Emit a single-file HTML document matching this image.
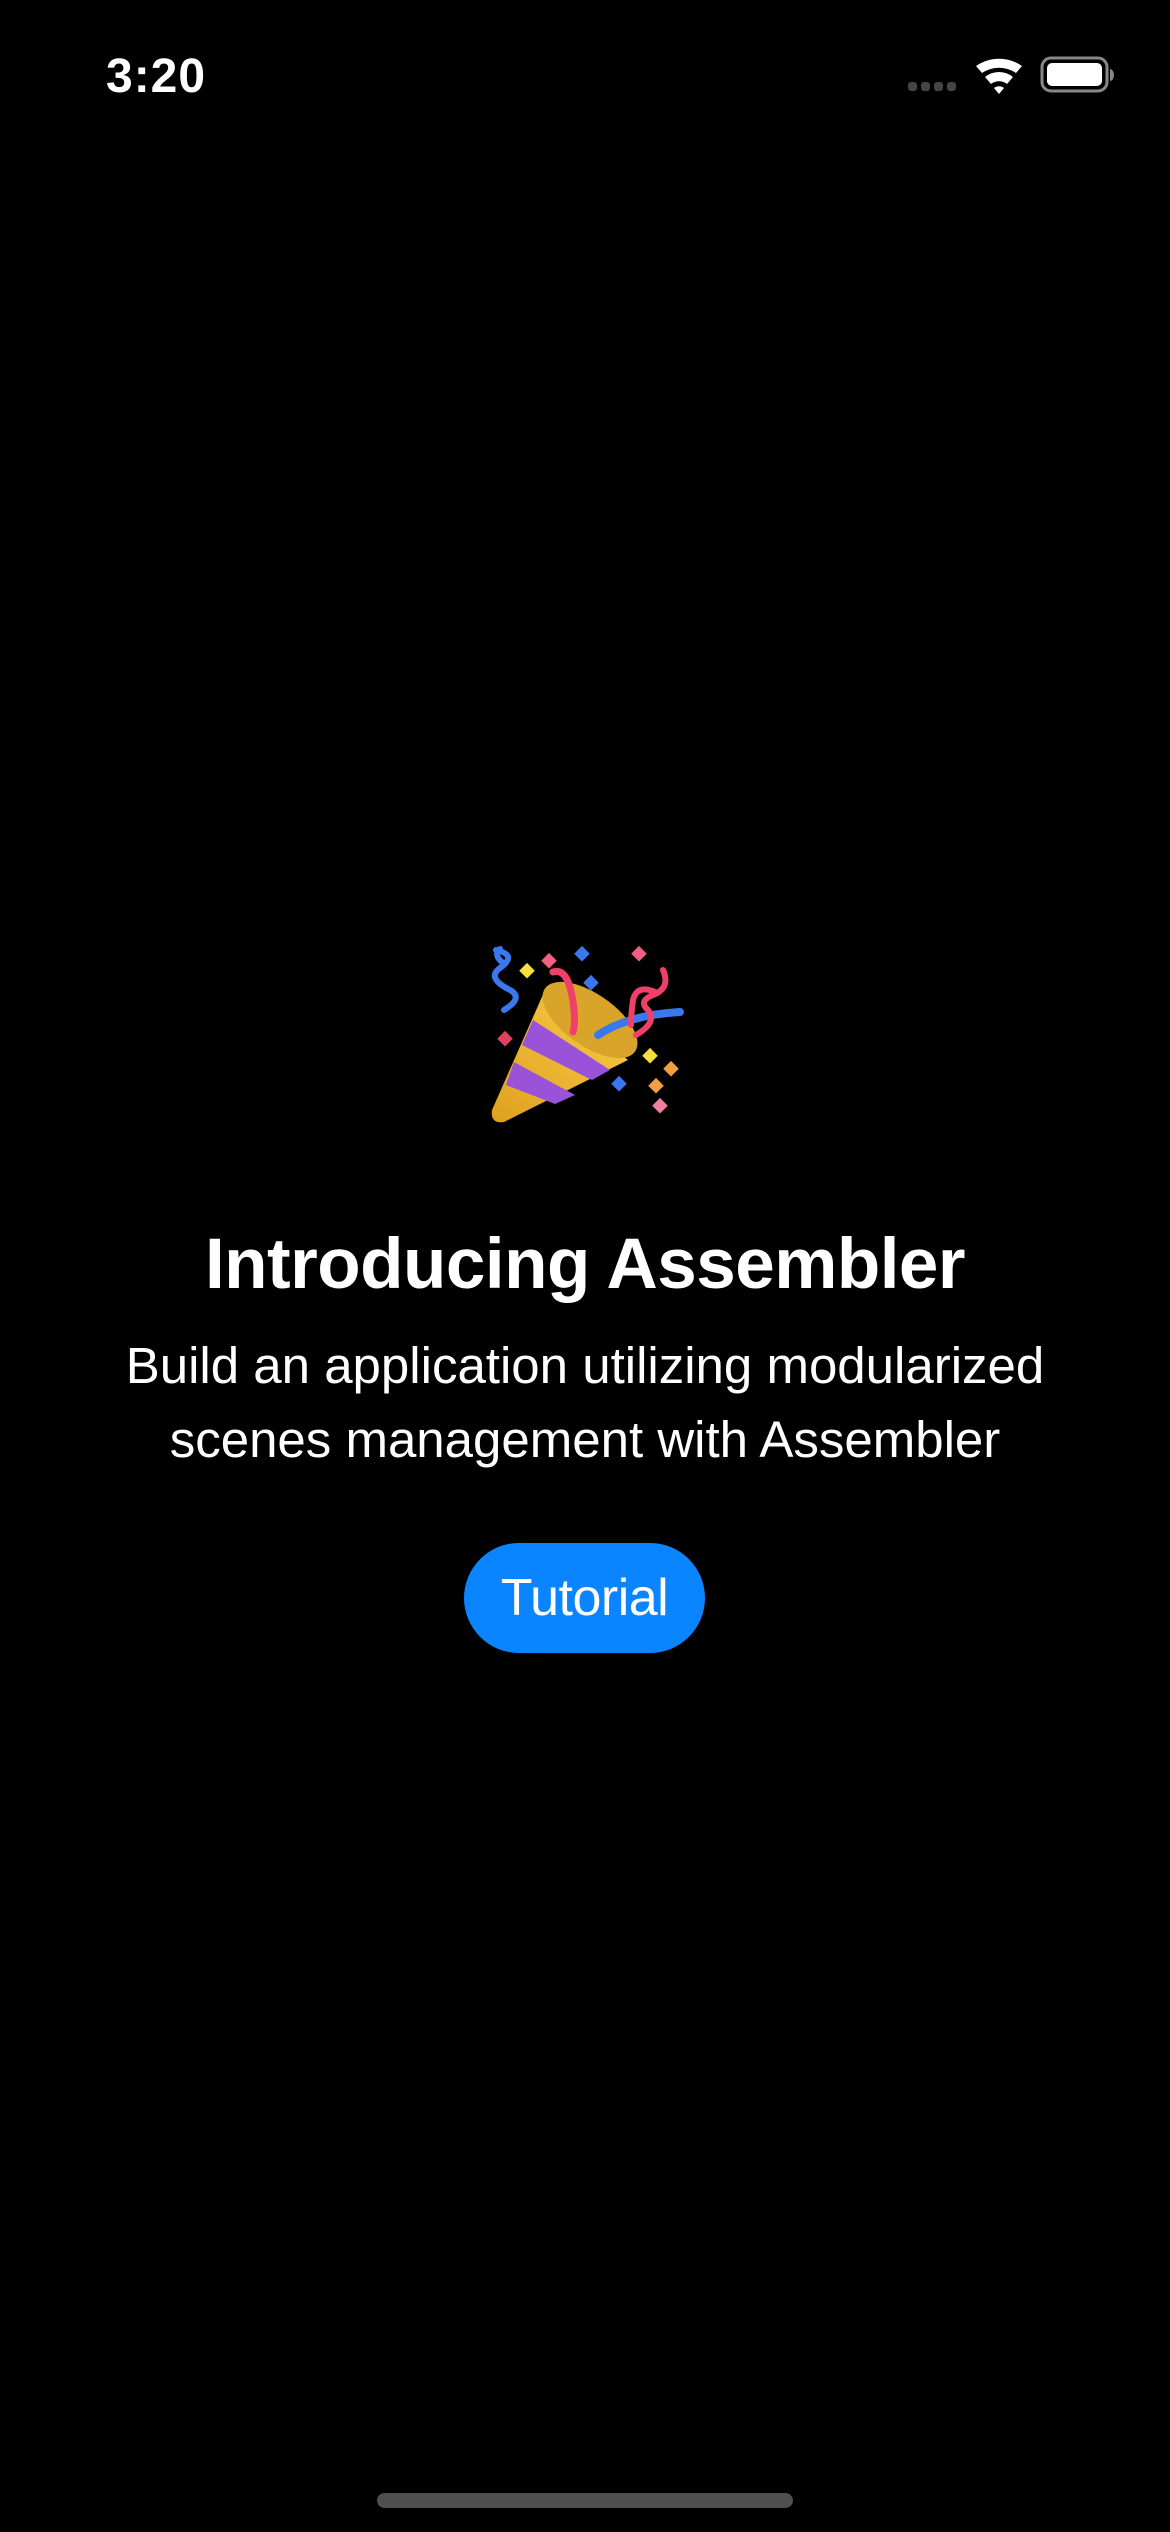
<!DOCTYPE html>
<html><head><meta charset="utf-8">
<style>
html,body{margin:0;padding:0;background:#000;}
body{width:1170px;height:2532px;position:relative;overflow:hidden;font-family:"Liberation Sans",sans-serif;color:#fff;}
.abs{position:absolute;}
.time{left:106px;top:49px;font-size:48px;font-weight:bold;letter-spacing:1px;}
.title{left:0;width:1170px;top:1225px;text-align:center;font-size:71px;font-weight:bold;letter-spacing:-0.5px;line-height:80px;}
.sub{left:0;width:1170px;top:1329px;text-align:center;font-size:51px;line-height:74px;letter-spacing:0px;}
.btn{left:464px;top:1543px;width:241px;height:110px;border-radius:55px;background:#0a84ff;text-align:center;line-height:110px;font-size:52px;letter-spacing:-0.5px;}
.home{left:377px;top:2493px;width:416px;height:15px;border-radius:8px;background:#4f4f4f;}
</style></head><body>
<div class="abs time">3:20</div>
<svg class="abs" style="left:900px;top:50px" width="220" height="50" viewBox="900 50 220 50">
 <g fill="#444"><rect x="908" y="82" width="9" height="9" rx="3"/><rect x="921" y="82" width="9" height="9" rx="3"/><rect x="934" y="82" width="9" height="9" rx="3"/><rect x="947" y="82" width="9" height="9" rx="3"/></g>
 <path d="M976 66 A40 40 0 0 1 1022 66 L1016 73 A30 30 0 0 0 982 73 Z" fill="#fff"/>
 <path d="M985 77 A22 22 0 0 1 1013 77 L1007 84 A13 13 0 0 0 991 84 Z" fill="#fff"/>
 <path d="M994 88 A8 8 0 0 1 1004 88 L999 94 Z" fill="#fff"/>
 <rect x="1042" y="58" width="65" height="33" rx="9" fill="none" stroke="#888" stroke-width="3"/>
 <rect x="1047" y="63" width="55" height="23" rx="5" fill="#fff"/>
 <path d="M1110 69 a4 6 0 0 1 0 12 z" fill="#888"/>
</svg>
<svg class="abs" style="left:480px;top:930px" width="210" height="205" viewBox="480 930 210 205">
 <defs><linearGradient id="g" x1="0" y1="1" x2="1" y2="0"><stop offset="0" stop-color="#e0a020"/><stop offset="1" stop-color="#f7cf4a"/></linearGradient></defs>
 <path d="M503 963 q-10 -8 -3 -14 M496 950 q22 5 4 18 q-14 10 10 22 q14 8 -6 20" stroke="#3a78f0" stroke-width="6" fill="none" stroke-linecap="round"/>
 <path d="M545 990 L492 1110 q-2 14 12 12 L628 1060 Z" fill="url(#g)"/>
 <path d="M533 1020 L610 1070 L592 1080 L522 1045 Z M514 1062 L575 1095 L555 1104 L506 1085 Z" fill="#9a52d8"/>
 <ellipse cx="590" cy="1020" rx="55" ry="26" transform="rotate(35 590 1020)" fill="#d8a42a"/>
 <path d="M553 972 q15 -5 20 30 q3 20 0 30" stroke="#f0406a" stroke-width="7" fill="none" stroke-linecap="round"/>
 <path d="M598 1035 q30 -20 82 -23" stroke="#3a78f0" stroke-width="8" fill="none" stroke-linecap="round"/>
 <path d="M663 970 q8 18 -10 25 q-15 6 -5 15 q10 12 -12 25 M655 992 q-18 -8 -22 8 q-2 15 -2 25" stroke="#f0406a" stroke-width="6" fill="none" stroke-linecap="round"/>
 <g>
 <rect x="522" y="965" width="11" height="11" fill="#f5e040" transform="rotate(45 527 970)"/>
 <rect x="544" y="955" width="11" height="11" fill="#f06080" transform="rotate(45 549 960)"/>
 <rect x="577" y="948" width="11" height="11" fill="#3a78f0" transform="rotate(45 582 953)"/>
 <rect x="586" y="977" width="11" height="11" fill="#3a78f0" transform="rotate(45 591 982)"/>
 <rect x="634" y="948" width="11" height="11" fill="#f06080" transform="rotate(45 639 953)"/>
 <rect x="500" y="1033" width="11" height="11" fill="#e04060" transform="rotate(45 505 1038)"/>
 <rect x="645" y="1050" width="11" height="11" fill="#f5e040" transform="rotate(45 650 1055)"/>
 <rect x="666" y="1063" width="11" height="11" fill="#f0a040" transform="rotate(45 671 1068)"/>
 <rect x="614" y="1078" width="11" height="11" fill="#3a78f0" transform="rotate(45 619 1083)"/>
 <rect x="651" y="1080" width="11" height="11" fill="#f0a040" transform="rotate(45 656 1085)"/>
 <rect x="655" y="1100" width="11" height="11" fill="#f080a0" transform="rotate(45 660 1105)"/>
 </g>
</svg>
<div class="abs title">Introducing Assembler</div>
<div class="abs sub">Build an application utilizing modularized<br>scenes management with Assembler</div>
<div class="abs btn">Tutorial</div>
<div class="abs home"></div>
</body></html>
